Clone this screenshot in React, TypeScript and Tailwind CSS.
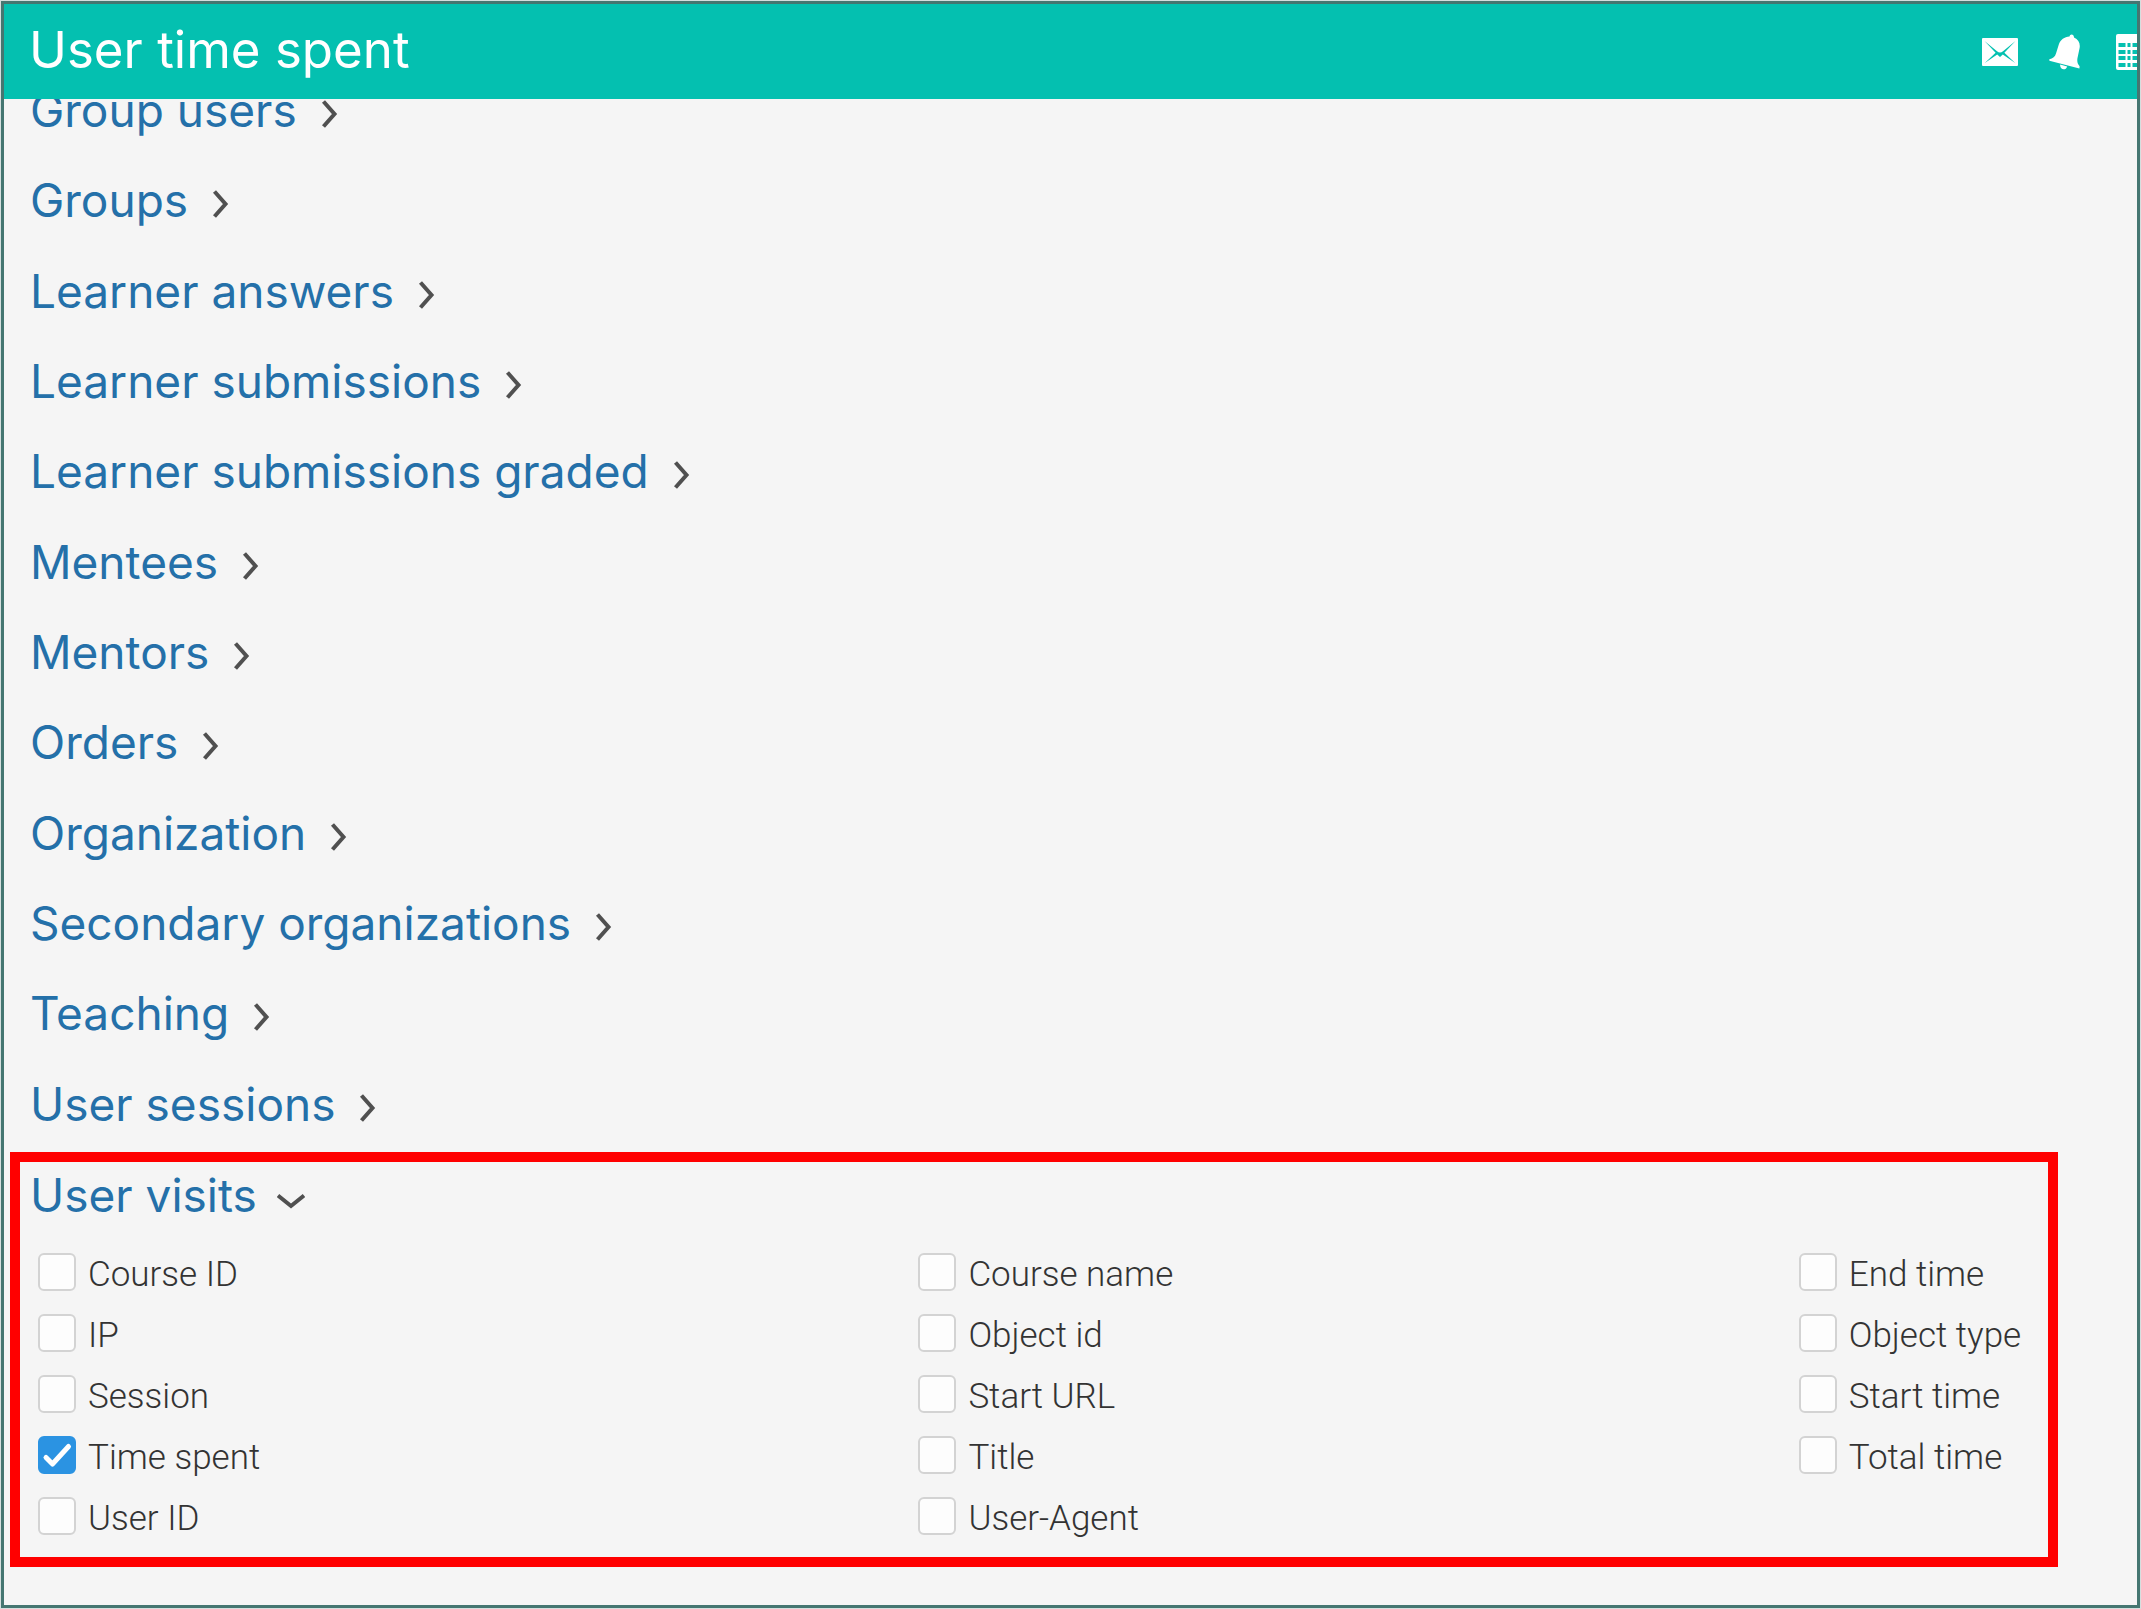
import { useState } from "react"

const GROUPS = [
  "Group users",
  "Groups",
  "Learner answers",
  "Learner submissions",
  "Learner submissions graded",
  "Mentees",
  "Mentors",
  "Orders",
  "Organization",
  "Secondary organizations",
  "Teaching",
  "User sessions",
]

const FIELDS = [
  "Course ID",
  "Course name",
  "End time",
  "IP",
  "Object id",
  "Object type",
  "Session",
  "Start URL",
  "Start time",
  "Time spent",
  "Title",
  "Total time",
  "User ID",
  "User-Agent",
]

function MailIcon() {
  return (
    <svg viewBox="0 0 36 28" className="h-7 w-9" aria-hidden="true">
      <rect width="36" height="28" rx="1" fill="#fff" />
      <path
        d="M2.5 3 L13.6 14.8 L2.8 25 L15.2 16.4 L18 19 L20.8 16.4 L33.2 25 L22.4 14.8 L33.5 3 L21 13.2 Q18 16 15 13.2 Z"
        fill="#04c0b0"
      />
    </svg>
  )
}

function BellIcon() {
  return (
    <svg viewBox="0 0 32 36" className="h-9 w-8" aria-hidden="true">
      <path
        d="M20.5 2.6 C20.8 -0.6 25.2 -0.4 25 3.6 C29.6 5.6 31.4 9.4 30.6 14 L28.4 24.5 C28 28 28.6 30 30.6 32.3 L30.4 34.6 L0.4 26.8 L0.3 25.2 C4 24.3 6 22.6 7 19.4 L9.8 10.6 C11.4 5.6 15.4 3 20.5 2.6 Z"
        fill="#fff"
      />
      <path d="M11.2 30.6 L18.2 32.4 C16.8 37 10.6 36 11.2 30.6 Z" fill="#fff" />
    </svg>
  )
}

function CalendarIcon() {
  const rows = [9, 16, 22, 29]
  return (
    <svg viewBox="0 0 36 36" className="h-9 w-9" aria-hidden="true">
      <rect width="36" height="36" rx="2" fill="#fff" />
      {rows.map((y) => (
        <g key={y} fill="#04c0b0">
          <rect x="2.5" y={y} width="7" height="4" />
          <rect x="11.5" y={y} width="3" height="4" />
          <rect x="16.5" y={y} width="7" height="4" />
          <rect x="26" y={y} width="7" height="4" />
        </g>
      ))}
    </svg>
  )
}

function Chevron({ open }: { open: boolean }) {
  return (
    <svg
      viewBox="0 0 28 28"
      className="mt-2 size-7"
      fill="none"
      stroke="#505050"
      strokeWidth="4"
      aria-hidden="true"
    >
      <path d={open ? "M1 10.5 L14 21 L27 10.5" : "M6.5 1.5 L17.5 14 L6.5 26.5"} />
    </svg>
  )
}

interface GroupButtonProps {
  label: string
  open?: boolean
  onClick?: () => void
}

function GroupButton({ label, open = false, onClick }: GroupButtonProps) {
  return (
    <button
      type="button"
      aria-expanded={open}
      onClick={onClick}
      className="flex items-center gap-5 text-[46px] leading-[66px] text-[#2470a9] whitespace-nowrap"
    >
      {label}
      <Chevron open={open} />
    </button>
  )
}

function FieldCheckbox({ label, checked }: { label: string; checked?: boolean }) {
  return (
    <label className="flex h-[61px] items-center gap-3 font-[Roboto,sans-serif] text-[35px] font-light text-[#333] whitespace-nowrap">
      <span className="grid shrink-0">
        <input
          type="checkbox"
          defaultChecked={checked}
          className="peer col-start-1 row-start-1 size-[38px] appearance-none rounded-md border-2 border-[#d3d3d3] bg-[#fdfdfd] checked:border-[#2b93e2] checked:bg-[#2b93e2]"
        />
        <svg
          viewBox="0 0 38 38"
          className="pointer-events-none invisible col-start-1 row-start-1 size-[38px] peer-checked:visible"
          fill="none"
          stroke="#fff"
          strokeWidth="5"
          strokeLinecap="round"
          strokeLinejoin="round"
          aria-hidden="true"
        >
          <path d="M8 21.5 L14.5 28 L30.5 10.5" />
        </svg>
      </span>
      <span className="pt-[7px]">{label}</span>
    </label>
  )
}

export default function App() {
  const [open, setOpen] = useState(true)

  return (
    <div className="flex min-h-screen flex-col bg-[#d5dfde] p-px font-[Inter,sans-serif]">
      <div className="flex flex-1 flex-col overflow-hidden border-[3px] border-[#457671] bg-[#f5f5f5]">
        <header className="flex h-[95px] items-center justify-between overflow-hidden bg-[#04c0b0] pl-[25px] text-white">
          <h1 className="pb-0.5 text-[51px]">User time spent</h1>
          <nav className="-mr-[15px] flex shrink-0 items-center">
            <button type="button" aria-label="Messages">
              <MailIcon />
            </button>
            <button type="button" aria-label="Notifications" className="ml-[31px]">
              <BellIcon />
            </button>
            <button type="button" aria-label="Calendar" className="ml-[35px]">
              <CalendarIcon />
            </button>
          </nav>
        </header>

        <main className="flex flex-1 flex-col overflow-hidden pb-[38px]">
          <ul className="-mt-[34px] flex flex-1 flex-col pb-[3px] pl-[26px]">
            {GROUPS.map((name) => (
              <li key={name} className="flex flex-1 items-center">
                <GroupButton label={name} />
              </li>
            ))}
          </ul>

          <section className="mr-[79px] ml-1.5 border-10 border-[#ff0000] pb-[11px]">
            <div className="pl-2.5">
              <GroupButton label="User visits" open={open} onClick={() => setOpen(!open)} />
            </div>
            {open && (
              <div className="mt-[13px] grid grid-cols-[43.8%_43.8%_auto] pl-[18px]">
                {FIELDS.map((field) => (
                  <FieldCheckbox key={field} label={field} checked={field === "Time spent"} />
                ))}
              </div>
            )}
          </section>
        </main>
      </div>
    </div>
  )
}
